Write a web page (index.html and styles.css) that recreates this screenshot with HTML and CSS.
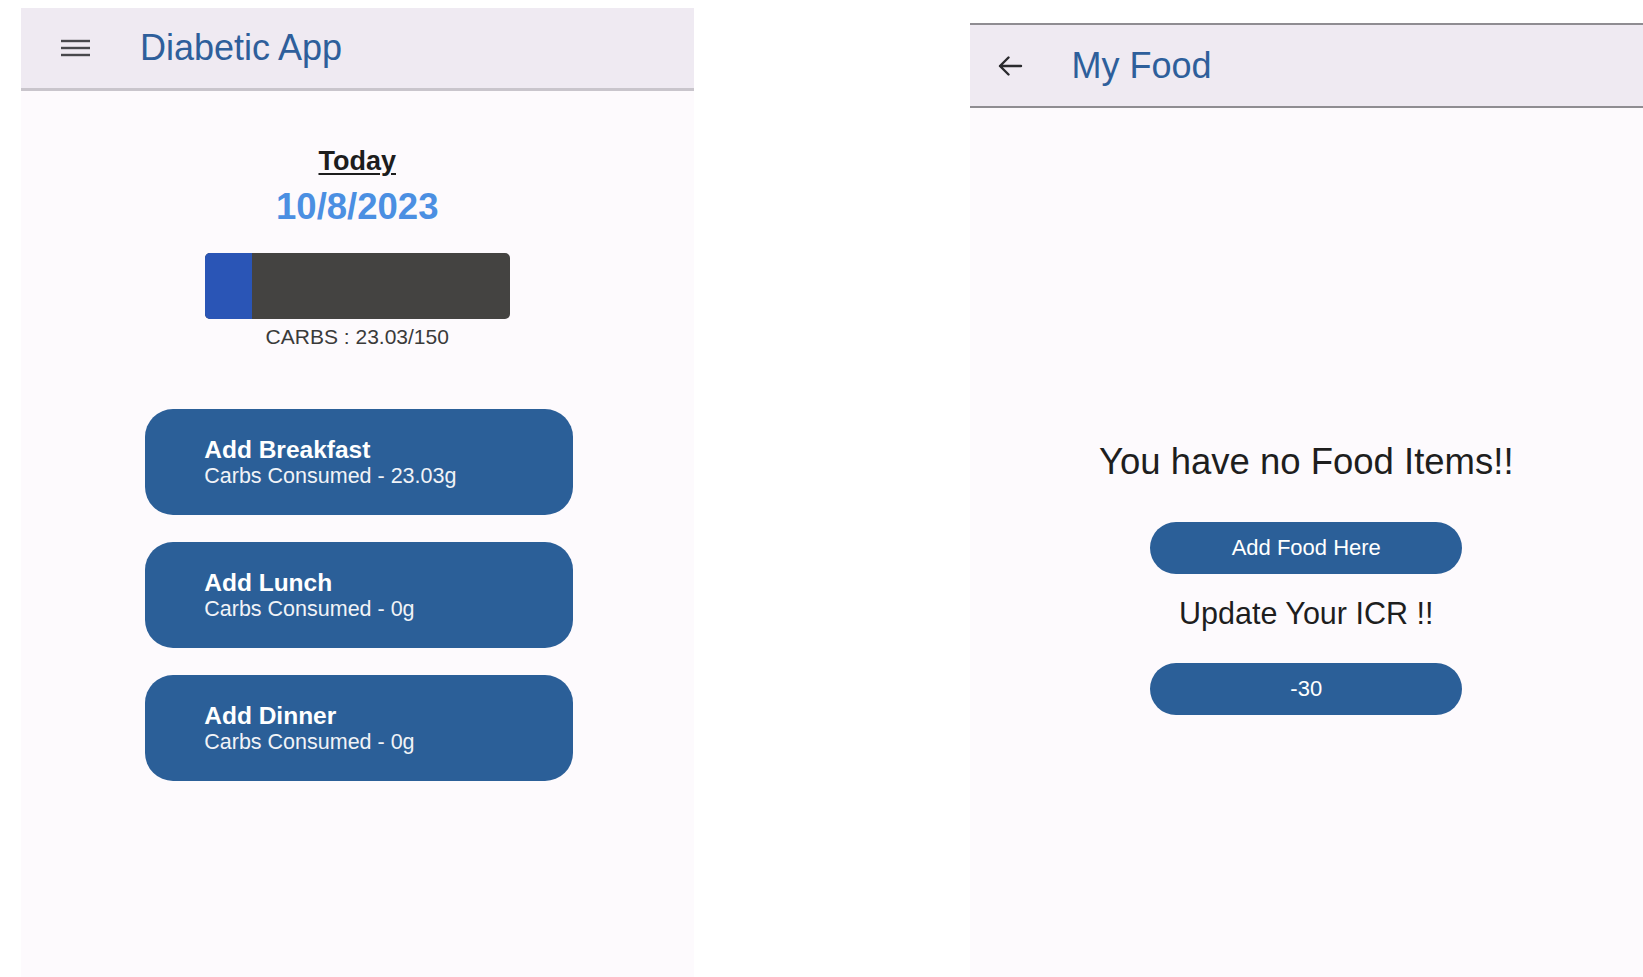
FILE: index.html
```html
<!DOCTYPE html>
<html>
<head>
<meta charset="utf-8">
<link rel="stylesheet" href="styles.css">
</head>
<body>
<div class="page">
  <section class="panel panel-left">
    <header class="appbar appbar-left">
      <svg class="menu-icon" width="30" height="18" viewBox="0 0 30 18">
        <rect x="0" y="0.8" width="29" height="2.4" fill="#48484c"/>
        <rect x="0" y="7.8" width="29" height="2.4" fill="#48484c"/>
        <rect x="0" y="14.8" width="29" height="2.4" fill="#48484c"/>
      </svg>
      <h1 class="appbar-title">Diabetic App</h1>
    </header>
    <main class="home">
      <div class="today">Today</div>
      <div class="date">10/8/2023</div>
      <div class="bar"><div class="bar-fill" style="width:15.35%"></div></div>
      <div class="carbs">CARBS : 23.03/150</div>
      <div class="meals">
        <div class="meal">
          <div class="meal-title">Add Breakfast</div>
          <div class="meal-sub">Carbs Consumed - 23.03g</div>
        </div>
        <div class="meal">
          <div class="meal-title">Add Lunch</div>
          <div class="meal-sub">Carbs Consumed - 0g</div>
        </div>
        <div class="meal">
          <div class="meal-title">Add Dinner</div>
          <div class="meal-sub">Carbs Consumed - 0g</div>
        </div>
      </div>
    </main>
  </section>
  <section class="panel panel-right">
    <header class="appbar appbar-right">
      <svg class="back-icon" width="26" height="22" viewBox="0 0 26 22">
        <path d="M24 11 H3 M11.5 2.5 L3 11 L11.5 19.5" stroke="#2a2a2e" stroke-width="2.4" fill="none" stroke-linecap="round" stroke-linejoin="round"/>
      </svg>
      <h1 class="appbar-title">My Food</h1>
    </header>
    <main class="food">
      <div class="empty">You have no Food Items!!</div>
      <div class="pill">Add Food Here</div>
      <div class="icr">Update Your ICR !!</div>
      <div class="pill pill-icr">-30</div>
    </main>
  </section>
</div>
</body>
</html>
```

FILE: styles.css
```css
* { box-sizing: border-box; }
html, body { margin: 0; padding: 0; background: #ffffff; }
body { font-family: "Liberation Sans", Arial, sans-serif; }

.page {
  display: flex;
  align-items: flex-start;
  width: 1643px;
  height: 977px;
  overflow: hidden;
}

.panel {
  background: #fdfafd;
  display: flex;
  flex-direction: column;
}

.panel-left {
  margin-left: 21px;
  margin-top: 8px;
  width: 673px;
  height: 969px;
}

.panel-right {
  margin-left: 276px;
  margin-top: 23px;
  width: 674px;
  height: 954px;
}

.appbar {
  display: flex;
  align-items: center;
  background: #efeaf2;
  flex-shrink: 0;
}

.appbar-left {
  height: 83px;
  border-bottom: 3px solid #c9c5cc;
  padding-left: 40px;
}

.appbar-right {
  height: 85px;
  border-top: 2px solid #8f8d92;
  border-bottom: 2px solid #8f8d92;
  padding-left: 27px;
}

.menu-icon { margin-right: 49px; }
.back-icon { margin-right: 49px; }

.appbar-title {
  margin: 0;
  font-weight: normal;
  font-size: 36px;
  color: #2e5f9b;
}

.home {
  display: flex;
  flex-direction: column;
  align-items: center;
}

.today {
  margin-top: 55px;
  font-size: 27px;
  line-height: 30px;
  font-weight: bold;
  color: #1d1d1d;
  text-decoration: underline;
  text-underline-offset: 3px;
}

.date {
  margin-top: 11px;
  font-size: 36.5px;
  line-height: 40px;
  font-weight: bold;
  color: #4b8fe2;
}

.bar {
  margin-top: 26px;
  width: 305px;
  height: 66px;
  background: #444341;
  border-radius: 5px;
  overflow: hidden;
  display: flex;
}

.bar-fill {
  height: 100%;
  background: #2a55b6;
}

.carbs {
  margin-top: 6px;
  font-size: 21px;
  line-height: 24px;
  color: #3a3a3a;
}

.meals {
  margin-top: 60px;
  margin-left: 4px;
  display: flex;
  flex-direction: column;
  gap: 27px;
}

.meal {
  width: 428px;
  height: 106px;
  background: #2b5f98;
  border-radius: 28px;
  padding-left: 59px;
  display: flex;
  flex-direction: column;
  justify-content: center;
  color: #ffffff;
}

.meal-title {
  font-size: 24.5px;
  line-height: 27px;
  font-weight: bold;
}

.meal-sub {
  font-size: 21.5px;
  line-height: 26px;
  color: #f1f3f7;
}

.food {
  display: flex;
  flex-direction: column;
  align-items: center;
}

.empty {
  margin-top: 333px;
  font-size: 36.5px;
  line-height: 42px;
  color: #1e1e1e;
}

.pill {
  margin-top: 39px;
  width: 312px;
  height: 52px;
  border-radius: 26px;
  background: #2b5f98;
  color: #ffffff;
  font-size: 22px;
  display: flex;
  align-items: center;
  justify-content: center;
}

.icr {
  margin-top: 21px;
  font-size: 30.5px;
  line-height: 36px;
  color: #1e1e1e;
}

.pill-icr {
  margin-top: 32px;
}
```
